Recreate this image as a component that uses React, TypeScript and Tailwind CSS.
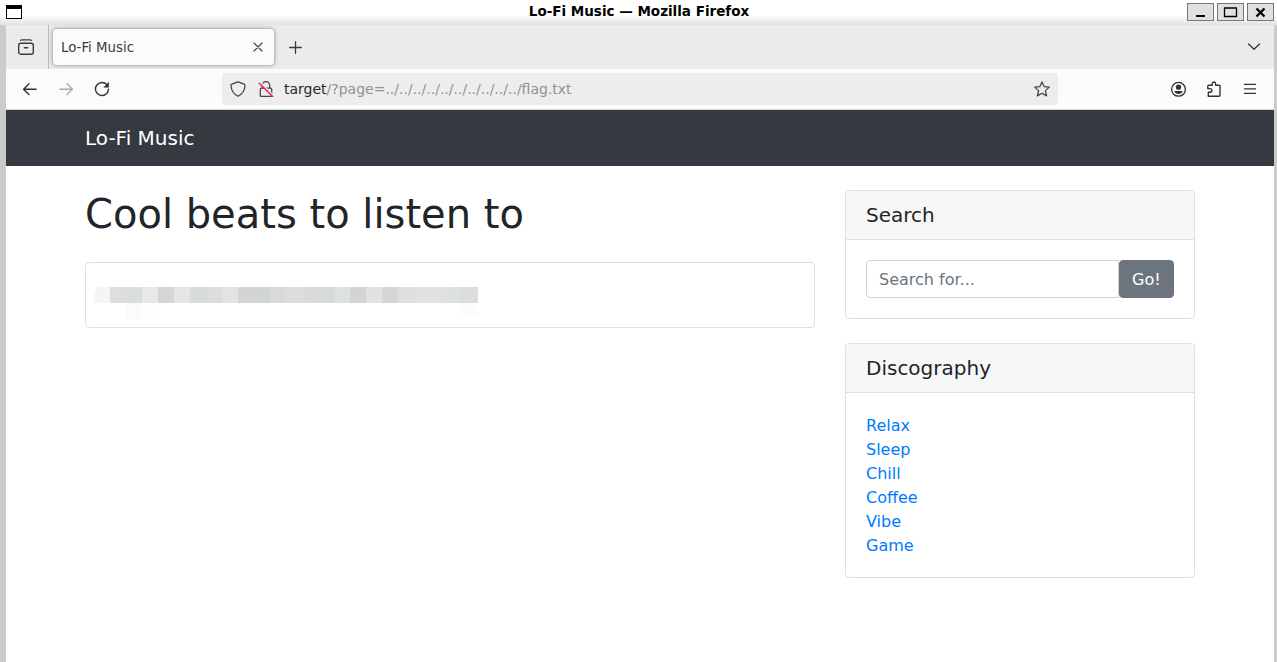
import React from "react";

const mosaic = [
  "#f3f6f5", "#dcdfde", "#d9dddb", "#e8e8e8", "#d5d5d5", "#e5e5e5", "#d8dcda", "#dadddc",
  "#e1e4e3", "#d4d4d4", "#d1d5d3", "#dadada", "#dddddd", "#dbdbdb", "#d6dad8", "#dde1df",
  "#d4d4d4", "#e2e2e2", "#d6d6d6", "#dfdfdf", "#e1e1e1", "#dfe2e1", "#dce0de", "#dcdcdc",
];

const genres = ["Relax", "Sleep", "Chill", "Coffee", "Vibe", "Game"];

function Icon({ children, className = "", size = 16 }: { children: React.ReactNode; className?: string; size?: number }) {
  return (
    <svg
      width={size}
      height={size}
      viewBox={`0 0 ${size} ${size}`}
      fill="none"
      stroke="currentColor"
      strokeWidth="1.25"
      strokeLinecap="round"
      strokeLinejoin="round"
      className={`block shrink-0 ${className}`}
    >
      {children}
    </svg>
  );
}

function TitleBar() {
  return (
    <div className="flex h-[25px] shrink-0 items-start bg-linear-to-b from-white from-60% to-[#e2e2e2] pl-1.5 pr-[3px]">
      <svg width="16" height="14" className="mt-[5px] block" shapeRendering="crispEdges">
        <rect width="16" height="14" fill="#000" />
        <rect x="1" y="4" width="14" height="9" fill="#fff" />
      </svg>
      <div className="flex-1 pl-[69px] text-center text-[13.5px] leading-[23px] font-bold text-black">Lo-Fi Music — Mozilla Firefox</div>
      <div className="mt-[3px] flex gap-[3px]">
        {["min", "max", "close"].map((kind) => (
          <div key={kind} className="flex h-[18px] w-[27px] items-center justify-center border border-[#777] bg-[#e0e0e0]">
            <svg width="25" height="16" fill="none" stroke="#000">
              {kind === "min" && <path d="M8 12h9" strokeWidth="2" />}
              {kind === "max" && <path d="M6.500 4v8.500h12V4M6 4h13" strokeWidth="1.300" />}
              {kind === "close" && <path d="M8.500 4.500l8 8m0-8l-8 8" strokeWidth="2.300" />}
            </svg>
          </div>
        ))}
      </div>
    </div>
  );
}

function TabStrip() {
  return (
    <div className="flex h-11 shrink-0 items-center bg-[#ebebeb] text-[#3b3b3b]">
      <div className="flex h-full w-[43px] items-center border-r border-[#b9b9b9] pl-3">
        <Icon>
          <path d="M2.500 1.400A2 2 0 0 1 4 .8h8a2 2 0 0 1 1.500.6" />
          <rect x=".7" y="4.200" width="14.600" height="11" rx="2" strokeWidth="1.400" />
          <path d="M6.300 8.800h3.400" strokeWidth="1.400" />
        </Icon>
      </div>
      <div className="ml-[4px] flex h-9 w-[221px] items-center justify-between rounded-[4px] bg-[#fbfbfb] pr-2.5 pl-2 text-[13.33px] shadow-[0_0_4px_rgba(0,0,0,0.45)]">
        <span className="pt-0.5">Lo-Fi Music</span>
        <Icon size={12}>
          <path d="M2 2l8 8M10 2l-8 8" strokeWidth="1.100" />
        </Icon>
      </div>
      <Icon className="ml-[13px]">
        <path d="M8.500 2.700v11.600M2.700 8.500h11.600" strokeWidth="1.300" />
      </Icon>
      <Icon className="mr-3 ml-auto">
        <path d="M2.500 5l5.500 5.300L13.500 5" strokeWidth="1.400" />
      </Icon>
    </div>
  );
}

function Toolbar() {
  return (
    <div className="flex h-[41px] shrink-0 items-center border-b border-[#d5d8da] bg-[#fbfbfb] text-[#333]">
      <Icon className="ml-4">
        <path d="M14.200 8.200H1.800M7 2.800L1.600 8.200 7 13.600" strokeWidth="1.400" />
      </Icon>
      <Icon className="ml-5 text-[#aaa]">
        <path d="M1.800 8.200h12.400M9 2.800l5.400 5.400L9 13.600" strokeWidth="1.400" />
      </Icon>
      <Icon className="ml-5">
        <path d="M13.400 4.400A6.500 6.500 0 1 0 14.500 8.200" strokeWidth="1.400" />
        <path d="M14.600 1.700v4.500h-4.500z" fill="currentColor" strokeWidth=".6" />
      </Icon>
      <div className="ml-[112px] flex h-8 w-[836px] items-center rounded-[4px] bg-[#ededed] px-2 text-[14px]">
        <Icon>
          <path d="M8 .8l6.200 2.300c.8.300.8.800.8 1.500-.2 5-2.600 8.500-7 10.700C3.600 13.100 1.200 9.600 1 4.600c0-.7.1-1.200.8-1.500z" stroke="#444" />
        </Icon>
        <Icon className="ml-3">
          <path d="M4.300 7V4.200a3.700 3.700 0 0 1 7.400 0V7M3.600 7h8.800a1.300 1.300 0 0 1 1.300 1.300v6.100a1 1 0 0 1-1 1H3.300a1 1 0 0 1-1-1V8.300A1.300 1.300 0 0 1 3.600 7z" stroke="#444" />
          <path d="M2.400 1.600L15.300 14.500" stroke="#ededed" strokeWidth="1.500" />
          <path d="M1.200 2.200L14.700 15.500" stroke="#e8254f" strokeWidth="1.400" />
        </Icon>
        <span className="ml-2.5 text-[#929292]">
          <span className="text-[#292929]">target</span>/?page=../../../../../../../../../../flag.txt
        </span>
        <Icon className="ml-auto text-[#444]">
          <path d="M8 .9l2.100 4.700 5.200.5-3.900 3.500 1.200 5.300L8 12.200l-4.600 2.700 1.200-5.300L.7 6.100l5.200-.5z" />
        </Icon>
      </div>
      <Icon className="ml-[112px]">
        <circle cx="8.500" cy="8.300" r="6.900" strokeWidth="1.300" />
        <circle cx="8.500" cy="6.200" r="2.600" fill="currentColor" stroke="none" />
        <path d="M4.200 10.100h8.600c-.7 2-2.200 3-4.300 3s-3.600-1-4.300-3z" fill="currentColor" stroke="none" />
      </Icon>
      <Icon className="ml-5">
        <path d="M2.300 15.200v-4h1.800a1.600 1.600 0 0 0 0-3.600H1.800V5.200a.9.9 0 0 1 .9-.9h3.500V2.700a1.700 1.700 0 0 1 3.400 0v1.600h3.500a.9.9 0 0 1 .9.9v9.100a.9.9 0 0 1-.9.9z" strokeWidth="1.400" />
      </Icon>
      <Icon className="ml-5">
        <path d="M2.500 3.400h11M2.500 7.900h11M2.500 12.400h11" strokeWidth="1.300" />
      </Icon>
    </div>
  );
}

function Card({ title, children }: { title: string; children: React.ReactNode }) {
  return (
    <section className="rounded-[4px] border border-[#dfdfdf] bg-white">
      <h5 className="rounded-t-[3px] border-b border-[#dfdfdf] bg-[#f7f7f7] px-5 py-3 text-xl leading-6">{title}</h5>
      <div className="p-5">{children}</div>
    </section>
  );
}

export default function App() {
  return (
    <div className="flex h-[662px] w-[1277px] flex-col overflow-hidden bg-white font-['DejaVu_Sans',sans-serif]">
      <TitleBar />
      <div className="flex min-h-0 flex-1 flex-col border-r-[3px] border-l-[6px] border-[#cbcbcb]">
        <TabStrip />
        <Toolbar />
        <nav className="flex h-14 shrink-0 items-center bg-[#343a40] pl-[79px] text-xl text-white">Lo-Fi Music</nav>
        <main className="flex gap-[30px] pt-6 pr-[79px] pl-[79px] text-base leading-6 text-[#212529]">
          <div className="w-[730px] shrink-0">
            <h1 className="mb-6 text-[40px] leading-[48px]">Cool beats to listen to</h1>
            <div className="h-[66px] rounded-[4px] border border-[#dfdfdf] pt-6 pl-2">
              <div className="flex overflow-hidden rounded-tl-[5px_14px]">
                {mosaic.map((color, i) => (
                  <span key={i} className="h-4 w-4" style={{ backgroundColor: color }} />
                ))}
              </div>
              <div className="flex">
                <span className="ml-8 h-4 w-4 bg-[#fbfbfb]" />
                <span className="h-4 w-4 bg-[#fefefe]" />
                <span className="ml-[304px] h-3 w-4 bg-[#fcfcfc]" />
              </div>
            </div>
          </div>
          <aside className="flex w-[350px] shrink-0 flex-col gap-6">
            <Card title="Search">
              <div className="flex h-[38px]">
                <input
                  type="text"
                  placeholder="Search for..."
                  className="w-[253px] rounded-l-[4px] border border-[#ced4da] px-3 pt-0.5 outline-none placeholder:text-[#6c757d]"
                />
                <button className="flex-none rounded-[4px] border border-[#6c757d] bg-[#6c757d] px-3 pt-0.5 text-white">Go!</button>
              </div>
            </Card>
            <Card title="Discography">
              <ul className="pt-px -mb-px">
                {genres.map((genre) => (
                  <li key={genre}>
                    <a href="#" className="text-[#007bff]">{genre}</a>
                  </li>
                ))}
              </ul>
            </Card>
          </aside>
        </main>
      </div>
    </div>
  );
}
